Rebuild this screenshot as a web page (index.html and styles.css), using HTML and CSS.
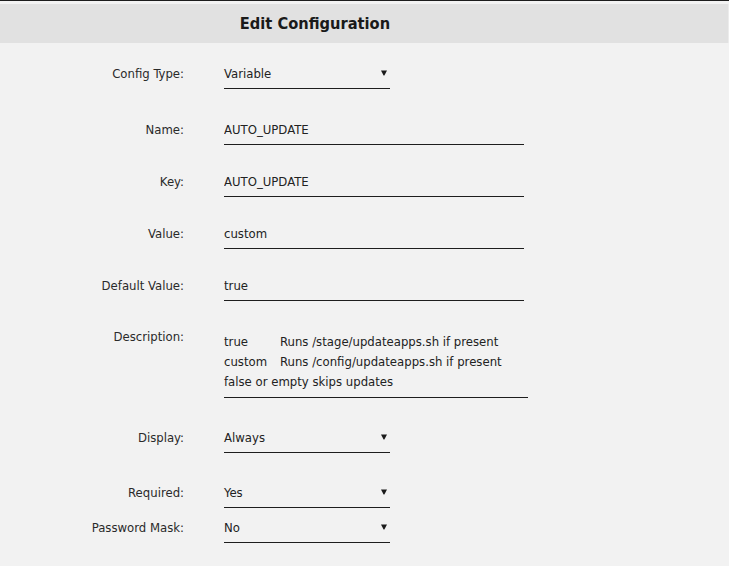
FILE: index.html
```html
<!DOCTYPE html>
<html>
<head>
    <meta charset="utf-8">
    <title>Edit Configuration</title>
    <link rel="stylesheet" href="styles.css">
</head>

<body>

    <div id="title_bar">
        <span id="title">Edit Configuration</span>
    </div>

    <form id="config_form">
        <div class="row first">
            <label class="lbl">Config Type:</label>
            <div class="field select">
                <span>Variable</span>
                <svg class="arrow" width="6" height="6" viewBox="0 0 6 6"><path d="M0 0.5H6L3.4 5.6H2.6Z"/></svg>
            </div>
        </div>
        <div class="row">
            <label class="lbl">Name:</label>
            <input class="field text" type="text" value="AUTO_UPDATE">
        </div>
        <div class="row">
            <label class="lbl">Key:</label>
            <input class="field text" type="text" value="AUTO_UPDATE">
        </div>
        <div class="row">
            <label class="lbl">Value:</label>
            <input class="field text" type="text" value="custom">
        </div>
        <div class="row">
            <label class="lbl">Default Value:</label>
            <input class="field text" type="text" value="true">
        </div>
        <div class="row wide desc_row">
            <label class="lbl">Description:</label>
            <div class="field desc">
                <div><span class="opt">true</span>Runs /stage/updateapps.sh if present</div>
                <div><span class="opt">custom</span>Runs /config/updateapps.sh if present</div>
                <div>false or empty skips updates</div>
            </div>
        </div>
        <div class="row wide">
            <label class="lbl">Display:</label>
            <div class="field select">
                <span>Always</span>
                <svg class="arrow" width="6" height="6" viewBox="0 0 6 6"><path d="M0 0.5H6L3.4 5.6H2.6Z"/></svg>
            </div>
        </div>
        <div class="row tight">
            <label class="lbl">Required:</label>
            <div class="field select">
                <span>Yes</span>
                <svg class="arrow" width="6" height="6" viewBox="0 0 6 6"><path d="M0 0.5H6L3.4 5.6H2.6Z"/></svg>
            </div>
        </div>
        <div class="row">
            <label class="lbl">Password Mask:</label>
            <div class="field select">
                <span>No</span>
                <svg class="arrow" width="6" height="6" viewBox="0 0 6 6"><path d="M0 0.5H6L3.4 5.6H2.6Z"/></svg>
            </div>
        </div>
    </form>

</body>

</html>
```

FILE: styles.css
```css
        html, body {
            margin: 0;
            background-color: #f2f2f2;
        }
        body {
            border-top: 1px solid #1c1c1c;
            font-family: "DejaVu Sans Condensed", "DejaVu Sans", sans-serif;
            font-size: 13px;
            color: #222;
        }
        #title_bar {
            margin-top: 3px;
            height: 39px;
            line-height: 40px;
            background-color: #e1e1e1;
            border-right: 1px solid #ececec;
        }
        #title {
            display: block;
            width: 630px;
            text-align: center;
            font-weight: bold;
            font-size: 16.3px;
            color: #1a1a1a;
        }
        #config_form {
            margin-top: 17px;
        }
        .row {
            display: flex;
            align-items: flex-start;
            margin-bottom: 23px;
        }
        .row.first {
            margin-bottom: 27px;
        }
        .row.wide {
            margin-bottom: 26px;
        }
        .row.tight {
            margin-bottom: 6px;
        }
        .row.desc_row {
            margin-top: -1px;
        }
        .lbl {
            width: 184px;
            flex: none;
            text-align: right;
            padding: 4px 0;
            line-height: 20px;
            color: #2a2a2a;
        }
        .field {
            font: inherit;
            margin-left: 40px;
            padding: 4px 0;
            line-height: 20px;
            height: 20px;
            border: none;
            border-bottom: 1px solid #1e1e1e;
            background: transparent;
            color: #222;
            outline: none;
        }
        .text {
            width: 300px;
        }
        .select {
            width: 166px;
            display: flex;
            justify-content: space-between;
            align-items: center;
        }
        .arrow {
            margin-right: 3px;
            margin-top: -2px;
            fill: #1a1a1a;
        }
        .desc {
            width: 304px;
            height: auto;
            padding: 9px 0 5px 0;
        }
        .opt {
            display: inline-block;
            width: 56px;
        }
```
